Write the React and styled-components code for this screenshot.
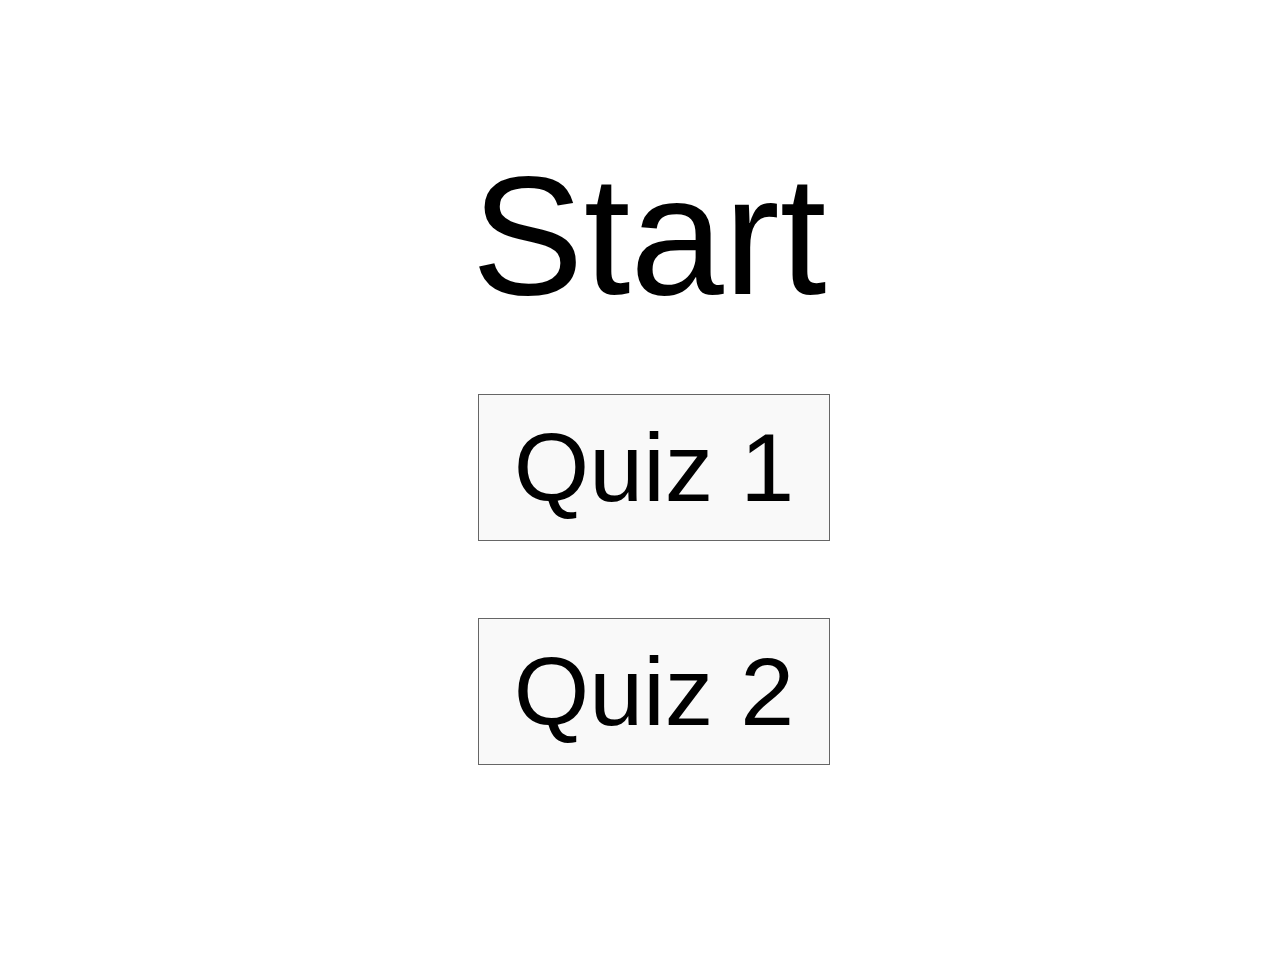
import React from "react";
import styled, { createGlobalStyle } from "styled-components";

const GlobalStyle = createGlobalStyle`
  body {
    margin: 0;
    background: #ffffff;
    font-family: "Liberation Sans", Arial, sans-serif;
    color: #000000;
  }
`;

const Page = styled.main`
  display: flex;
  flex-direction: column;
  align-items: center;
  padding: 140px 0 0 28px;
`;

const Title = styled.h1`
  margin: 0 10px 61px 0;
  font-size: 168px;
  font-weight: normal;
  line-height: 1.15;
`;

const QuizList = styled.div`
  display: flex;
  flex-direction: column;
  gap: 77px;
`;

const QuizButton = styled.button`
  width: 352px;
  height: 147px;
  padding: 0;
  border: 1px solid #666666;
  background: #f9f9f9;
  color: #000000;
  font-family: "Liberation Sans", Arial, sans-serif;
  font-size: 97px;
  line-height: 1.15;
  cursor: pointer;
`;

const quizzes = ["Quiz 1", "Quiz 2"];

const App = () => {
  return (
    <>
      <GlobalStyle />
      <Page>
        <Title>Start</Title>
        <QuizList>
          {quizzes.map((name) => (
            <QuizButton key={name}>{name}</QuizButton>
          ))}
        </QuizList>
      </Page>
    </>
  );
};

export default App;
